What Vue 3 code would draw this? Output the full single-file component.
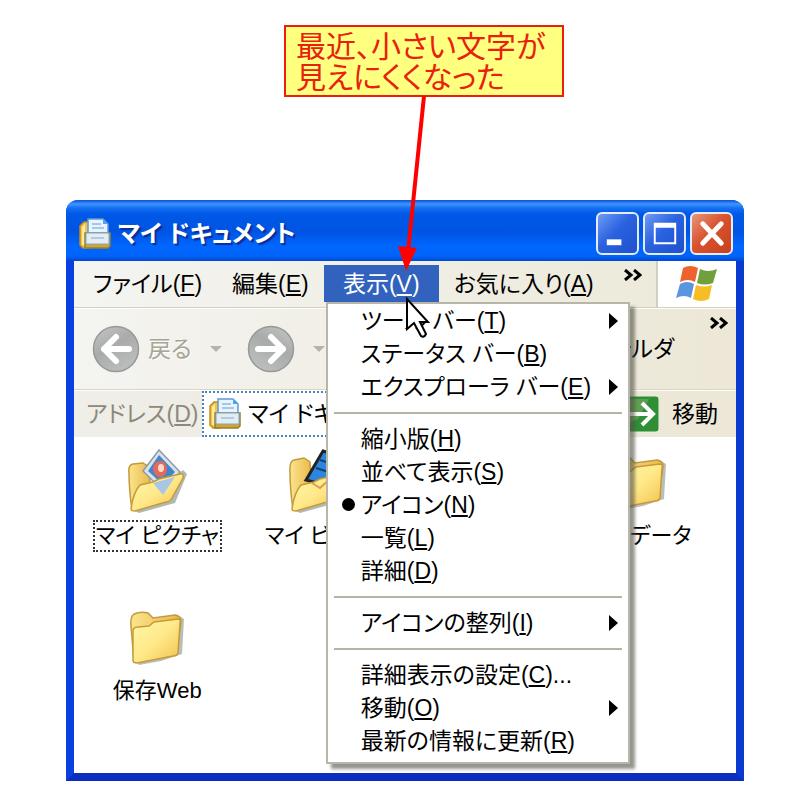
<script setup>
import { ref } from 'vue'

const menus = [
    { id: 'file', text: 'ファイル', key: 'F' },
    { id: 'edit', text: '編集', key: 'E' },
    { id: 'view', text: '表示', key: 'V' },
    { id: 'fav', text: 'お気に入り', key: 'A' },
]

// each inner list is one group, groups are divided by a line
const viewMenu = [
    [
        { text: 'ツール バー', key: 'T', sub: true },
        { text: 'ステータス バー', key: 'B' },
        { text: 'エクスプローラ バー', key: 'E', sub: true },
    ],
    [
        { text: '縮小版', key: 'H' },
        { text: '並べて表示', key: 'S' },
        { text: 'アイコン', key: 'N', checked: true },
        { text: '一覧', key: 'L' },
        { text: '詳細', key: 'D' },
    ],
    [
        { text: 'アイコンの整列', key: 'I', sub: true },
    ],
    [
        { text: '詳細表示の設定', key: 'C', tail: '...' },
        { text: '移動', key: 'O', sub: true },
        { text: '最新の情報に更新', key: 'R' },
    ],
]

const files = [
    { name: 'マイ ピクチャ', icon: 'pictures' },
    { name: 'マイ ビデオ', icon: 'video' },
    { name: '受信データ', icon: 'folder' },
    { name: '保存Web', icon: 'folder' },
]

const openMenu = ref('view')
const selected = ref('マイ ピクチャ')
const address = ref('マイ ドキュメント')

const toggleMenu = (id) => {
    openMenu.value = openMenu.value === id ? null : id
}
</script>

<template>
    <div class="page">
        <svg class="defs" width="0" height="0" aria-hidden="true">
            <defs>
                <linearGradient id="yellow" x1="0" y1="0" x2="1" y2="1">
                    <stop offset="0" stop-color="#fff7a8" />
                    <stop offset="0.5" stop-color="#ffe98a" />
                    <stop offset="1" stop-color="#f2bf4a" />
                </linearGradient>
                <linearGradient id="back" x1="0" y1="0" x2="1" y2="0">
                    <stop offset="0" stop-color="#fbe48c" />
                    <stop offset="1" stop-color="#e9b84a" />
                </linearGradient>
                <linearGradient id="disc" x1="0" y1="0" x2="0.6" y2="1">
                    <stop offset="0" stop-color="#c6c8c8" />
                    <stop offset="0.5" stop-color="#a9abab" />
                    <stop offset="1" stop-color="#bcbebe" />
                </linearGradient>
                <symbol id="docs" viewBox="0 0 34 34">
                    <path d="M2 9 L6 5 H11 V31 H5 L2 28Z" fill="#f3c44a" stroke="#c58b1c" stroke-width="1.5" />
                    <path d="M4 10 L7 7 V28 H4Z" fill="#ffe99a" />
                    <path d="M10 2 H25 L30 7 V18 H10Z" fill="#e8f3fd" stroke="#5d9ad6" stroke-width="1.5" />
                    <path d="M25 2 V7 H30Z" fill="#4aa6e8" />
                    <path d="M14 7 H23 M14 11 H26" stroke="#8dbbe6" stroke-width="1.5" />
                    <path d="M7 16 H32 V29 L30 31 H7 Z" fill="#d9a328" stroke="#8f8430" stroke-width="1.5" />
                    <path d="M8 16 H31 V27 H8Z" fill="#e6edf2" stroke="#7da7cf" stroke-width="1" />
                    <path d="M13 21 H26" stroke="#9dc1df" stroke-width="1.5" />
                </symbol>
                <symbol id="folder" viewBox="0 0 64 64">
                    <path d="M10 56 L14 61 L36 57 L57 50 L59 15 L54 12 Z" fill="#7c8a80" opacity="0.55" />
                    <path d="M6 22 Q5 13 9 10 Q16 7 23 9 L28 14 L50 11 Q56 12 56 17 L52 48 L9 58 Z" fill="url(#back)" stroke="#c39a3c" stroke-width="1.5" />
                    <path d="M8 26 Q9 23 13 23 L24 22 L29 18 L53 15 Q56 15 55 19 L53 49 Q52 52 48 52 L12 59 Q8 59 8 56 Z" fill="url(#yellow)" stroke="#c79a3a" stroke-width="1.5" />
                </symbol>
                <symbol id="pictures" viewBox="0 0 64 64">
                    <path d="M8 61 L14 64 L50 54 L62 25 L58 21 Z" fill="#7c8a80" opacity="0.6" />
                    <path d="M4 24 Q3 16 8 15 L18 14 L24 18 L26 50 L7 61 Q4 40 4 24Z" fill="url(#back)" stroke="#c39a3c" stroke-width="1.5" />
                    <path d="M34 1 L55 23 L38 42 L18 22 Z" fill="#dbe3ea" stroke="#8d9aa8" stroke-width="1.5" />
                    <path d="M34 6 L50 23 L38 36 L23 22 Z" fill="#3f86cf" />
                    <ellipse cx="35" cy="20" rx="7" ry="8" fill="#e46a57" />
                    <ellipse cx="36" cy="19" rx="3" ry="4" fill="#fbd9cc" />
                    <path d="M6 60 Q8 44 15 36 L28 33 L34 30 L55 25 Q59 24 58 29 L47 49 Q45 53 41 53 L10 62 Q6 62 6 60Z" fill="url(#yellow)" stroke="#c79a3a" stroke-width="1.5" />
                    <path d="M28 34 L50 28 L38 46 Z" fill="#a9c6e4" />
                </symbol>
                <symbol id="video" viewBox="0 0 64 64">
                    <path d="M8 61 L14 64 L50 54 L62 25 L58 21 Z" fill="#7c8a80" opacity="0.6" />
                    <path d="M4 24 Q3 12 8 11 L18 9 L24 13 L26 50 L7 61 Q4 40 4 24Z" fill="url(#back)" stroke="#c39a3c" stroke-width="1.5" />
                    <path d="M37 2 L60 9 L46 38 L20 31 Z" fill="#2d86dd" stroke="#222" stroke-width="3" />
                    <path d="M30 19 L52 26 M34 11 L56 18" stroke="#123f78" stroke-width="2" />
                    <path d="M6 60 Q8 44 15 36 L28 33 L34 30 L55 25 Q59 24 58 29 L47 49 Q45 53 41 53 L10 62 Q6 62 6 60Z" fill="url(#yellow)" stroke="#c79a3a" stroke-width="1.5" />
                    <path d="M26 34 L34 39 L46 28" fill="none" stroke="#e09a4c" stroke-width="2" />
                </symbol>
                <symbol id="arrow-disc" viewBox="0 0 48 48">
                    <circle cx="24" cy="24" r="22.5" fill="url(#disc)" stroke="#979999" stroke-width="1.5" />
                    <path d="M37 24 H12 M24 12 L12 24 L24 36" fill="none" stroke="#fff" stroke-width="6" stroke-linecap="round" stroke-linejoin="round" />
                </symbol>
            </defs>
        </svg>

        <div class="callout">
            最近、小さい文字が<br>見えにくくなった
            <svg class="pointer" width="30" height="176" viewBox="0 0 30 176" aria-hidden="true">
                <path d="M26 0 L10 156" stroke="#f00" stroke-width="4" />
                <path d="M0 150 L19 152 L8 175 Z" fill="#f00" />
            </svg>
        </div>

        <div class="window">
            <header class="titlebar">
                <svg class="docs-icon"><use href="#docs" /></svg>
                <h1>マイ ドキュメント</h1>
                <button class="cap" aria-label="最小化">
                    <svg viewBox="0 0 40 40"><path d="M9 26 H24 V32 H9Z" fill="#fff" /></svg>
                </button>
                <button class="cap" aria-label="最大化">
                    <svg viewBox="0 0 40 40"><path d="M9 9 H32 V31 H9Z M11 14 V29 H30 V14Z" fill="#fff" fill-rule="evenodd" /></svg>
                </button>
                <button class="cap close" aria-label="閉じる">
                    <svg viewBox="0 0 40 40"><path d="M11 10 L30 30 M30 10 L11 30" stroke="#fff" stroke-width="5" stroke-linecap="round" /></svg>
                </button>
            </header>

            <nav class="menubar">
                <div v-for="m in menus" :key="m.id" class="menu">
                    <button class="menu-title" :class="{ open: openMenu === m.id }" @click="toggleMenu(m.id)">{{ m.text }}(<u>{{ m.key }}</u>)</button>
                    <div v-if="m.id === 'view' && openMenu === 'view'" class="dropdown">
                        <div v-for="(group, i) in viewMenu" :key="i" class="group">
                            <button v-for="item in group" :key="item.text" class="item" :class="{ checked: item.checked, sub: item.sub }">{{ item.text }}(<u>{{ item.key }}</u>){{ item.tail }}</button>
                        </div>
                    </div>
                    <svg v-if="m.id === 'view'" class="cursor" width="26" height="42" viewBox="0 0 26 42" aria-hidden="true">
                        <path d="M2 2 V32 L9 26 L16 39 Q19 41 21 37 L15 25 H23 Z" fill="#fff" stroke="#000" stroke-width="2" />
                    </svg>
                </div>
                <button class="more" aria-label="その他のメニュー">
                    <svg width="18" height="12" viewBox="0 0 18 12"><path d="M1 1 L7 6 L1 11 M10 1 L16 6 L10 11" fill="none" stroke="#000" stroke-width="3" /></svg>
                </button>
                <div class="flag">
                    <svg width="42" height="38" viewBox="0 0 42 38">
                        <path d="M7 3 Q14 -1 22 3 L19 17 Q12 13 4 17 Z" fill="#f0622d" />
                        <path d="M24 4 Q32 8 41 4 L37 18 Q29 21 21 18 Z" fill="#6fa03c" />
                        <path d="M4 19 Q11 15 18 19 L15 33 Q8 29 0 33 Z" fill="#5a96e0" />
                        <path d="M20 20 Q28 23 36 20 L33 34 Q25 38 17 34 Z" fill="#f7bd24" />
                    </svg>
                </div>
            </nav>

            <div class="toolbar">
                <button class="tool" disabled>
                    <svg class="disc"><use href="#arrow-disc" /></svg>
                    <span>戻る</span>
                    <i class="caret"></i>
                </button>
                <button class="tool" aria-label="進む" disabled>
                    <svg class="disc flip"><use href="#arrow-disc" /></svg>
                    <i class="caret"></i>
                </button>
                <button class="tool folders">フォルダ</button>
                <button class="more end" aria-label="その他のボタン">
                    <svg width="18" height="12" viewBox="0 0 18 12"><path d="M1 1 L7 6 L1 11 M10 1 L16 6 L10 11" fill="none" stroke="#000" stroke-width="3" /></svg>
                </button>
            </div>

            <form class="address" @submit.prevent>
                <label for="address">アドレス(<u>D</u>)</label>
                <div class="box">
                    <svg class="docs-icon"><use href="#docs" /></svg>
                    <input id="address" v-model="address" type="text">
                </div>
                <button class="go">
                    <svg width="36" height="38" viewBox="0 0 36 38">
                        <rect x="1" y="1" width="34" height="36" rx="3" fill="#2f8f35" stroke="#e2f0dc" />
                        <path d="M4 4 H25 L14 24 L4 28Z" fill="#5f9f52" />
                        <path d="M5 19 H28 M18 8 L29 19 L18 30" fill="none" stroke="#fff" stroke-width="4" />
                    </svg>
                    移動
                </button>
            </form>

            <main class="files">
                <button v-for="f in files" :key="f.name" class="file" :class="{ selected: selected === f.name }" @click="selected = f.name">
                    <svg class="file-icon"><use :href="'#' + f.icon" /></svg>
                    <span>{{ f.name }}</span>
                </button>
            </main>
        </div>
    </div>
</template>

<style>
body {
    background: #fff;
}
</style>

<style scoped>
.page {
    padding: 25px 56px 19px 66px;
    font: 23px/32px "Liberation Sans", "Noto Sans CJK JP", sans-serif;
    font-feature-settings: "palt";
    color: #000;
}

.defs {
    position: absolute;
}

button, input {
    margin: 0;
    padding: 0;
    border: 0;
    background: none;
    font: inherit;
    font-feature-settings: inherit;
    color: inherit;
    white-space: nowrap;
}

svg {
    display: block;
    flex: none;
}

u {
    text-decoration-thickness: 2px;
    text-underline-offset: 2px;
}

.callout {
    position: relative;
    box-sizing: border-box;
    width: 280px;
    height: 72px;
    margin: 0 0 103px 218px;
    padding: 4px 10px;
    border: 2px solid #e8200c;
    background: #ffff80;
    color: #e8200c;
    font-size: 30px;
    line-height: 31px;
    white-space: nowrap;
}

.pointer {
    position: absolute;
    left: 112px;
    top: 69px;
    z-index: 3;
}

.window {
    border: 8px solid #0a3fe0;
    border-color: #0a3fe0 #0a3ad0 #0a2fc0 #0a3fe0;
    border-top: 0;
    border-radius: 12px 12px 0 0;
    background: #fff;
}

.titlebar {
    display: flex;
    align-items: center;
    gap: 4px;
    height: 61px;
    margin: 0 -8px;
    padding: 6px 11px 0 12px;
    box-sizing: border-box;
    border-radius: 12px 12px 0 0;
    background: linear-gradient(#0a50d8 0, #3f96ff 4px, #1470f2 8px, #0058e6 14px, #0054e3 32px, #0066ff 46px, #0064fa 56px, #0048d0 61px);
    color: #fff;
}

.titlebar h1 {
    flex: 1;
    margin: 0 0 0 2px;
    font-size: 24px;
    font-weight: bold;
    text-shadow: 2px 2px 1px #0a2f9a;
}

.docs-icon {
    width: 34px;
    height: 34px;
}

.cap {
    width: 43px;
    height: 43px;
    box-sizing: border-box;
    border: 2px solid #e4ecfb;
    border-radius: 6px;
    background: linear-gradient(135deg, #6f9cf4, #2a62e0 45%, #1d50cc);
}

.cap svg {
    width: 39px;
    height: 39px;
}

.close {
    background: linear-gradient(135deg, #e5977c, #d9532f 45%, #c8401c);
}

.menubar {
    display: flex;
    height: 46px;
    padding-left: 4px;
    border-bottom: 1px solid #d3d0bf;
    background: linear-gradient(90deg, #f4f4f1, #ece9d8);
}

.menu {
    position: relative;
    padding-top: 4px;
}

.menu-title {
    height: 37px;
    padding: 0 15px;
}

.menu-title.open {
    min-width: 115px;
    background: #3163be;
    color: #fff;
}

.dropdown {
    position: absolute;
    z-index: 2;
    top: 41px;
    left: 2px;
    box-sizing: border-box;
    width: 304px;
    padding-bottom: 5px;
    border: 2px solid #b8b6a8;
    background: #fff;
    box-shadow: 5px 5px 3px rgba(80, 80, 70, 0.6);
}

.group + .group {
    padding-top: 19px;
    background: linear-gradient(#b5b4a4, #b5b4a4) 6px 9px / 288px 2px no-repeat;
}

.item {
    position: relative;
    display: block;
    width: 100%;
    height: 33px;
    padding-left: 33px;
    text-align: left;
}

.item.sub::after {
    content: "";
    position: absolute;
    right: 10px;
    top: 9px;
    border: 8px solid transparent;
    border-left: 9px solid #000;
    border-right: 0;
}

.item.checked::before {
    content: "";
    position: absolute;
    left: 14px;
    top: 10px;
    width: 13px;
    height: 13px;
    border-radius: 50%;
    background: #000;
}

.cursor {
    position: absolute;
    z-index: 3;
    left: 81px;
    top: 36px;
}

.more {
    align-self: flex-start;
    margin-left: auto;
    padding: 8px 14px 0 0;
}

.flag {
    display: flex;
    align-items: center;
    justify-content: center;
    width: 80px;
    box-sizing: border-box;
    border-left: 2px solid #d3d0bf;
    background: #fff;
}

.toolbar {
    display: flex;
    align-items: center;
    height: 80px;
    padding-left: 18px;
    border-top: 1px solid #fff;
    border-bottom: 1px solid #d8d5c2;
    background: linear-gradient(90deg, #f4f4f1, #ece7d6);
}

.tool {
    display: flex;
    align-items: center;
}

.tool:disabled {
    color: #a8a595;
    text-shadow: 1px 1px #fff;
}

.tool span {
    margin-left: 8px;
}

.disc {
    width: 48px;
    height: 48px;
}

.flip {
    transform: scaleX(-1);
}

.caret {
    margin: 0 25px 0 18px;
    border: 6px solid transparent;
    border-top-color: #b5b3aa;
    border-bottom: 0;
}

.folders {
    margin-left: auto;
}

.end {
    margin-left: 36px;
    padding: 8px 8px 0 0;
}

.address {
    display: flex;
    align-items: center;
    height: 46px;
    padding: 0 18px 0 12px;
    border-top: 1px solid #fff;
    background: linear-gradient(90deg, #efeee8, #ece7d6);
}

.address label {
    width: 116px;
    color: #8c897c;
}

.box {
    display: flex;
    flex: 1;
    align-items: center;
    gap: 6px;
    height: 46px;
    min-width: 0;
    box-sizing: border-box;
    padding-left: 4px;
    border: 2px dotted #4b80b8;
    background: #fff;
}

.box input {
    flex: 1;
    min-width: 0;
    outline: 0;
}

.go {
    display: flex;
    align-items: center;
    gap: 12px;
    margin-left: 10px;
}

.files {
    display: grid;
    grid-template-columns: repeat(4, 1fr);
    grid-auto-rows: 155px;
    min-height: 324px;
    padding: 12px 17px 0 3px;
    font-size: 22px;
}

.file {
    display: flex;
    flex-direction: column;
    align-items: center;
    gap: 7px;
    min-width: 0;
}

/* the third icon sits in the last column */
.file:nth-child(3) {
    grid-column: 4;
}

.file-icon {
    width: 64px;
    height: 64px;
}

.file span {
    box-sizing: border-box;
    height: 32px;
    padding: 0 1px;
    border: 2px dotted transparent;
    line-height: 28px;
}

.file.selected span {
    border-color: #333;
}
</style>
